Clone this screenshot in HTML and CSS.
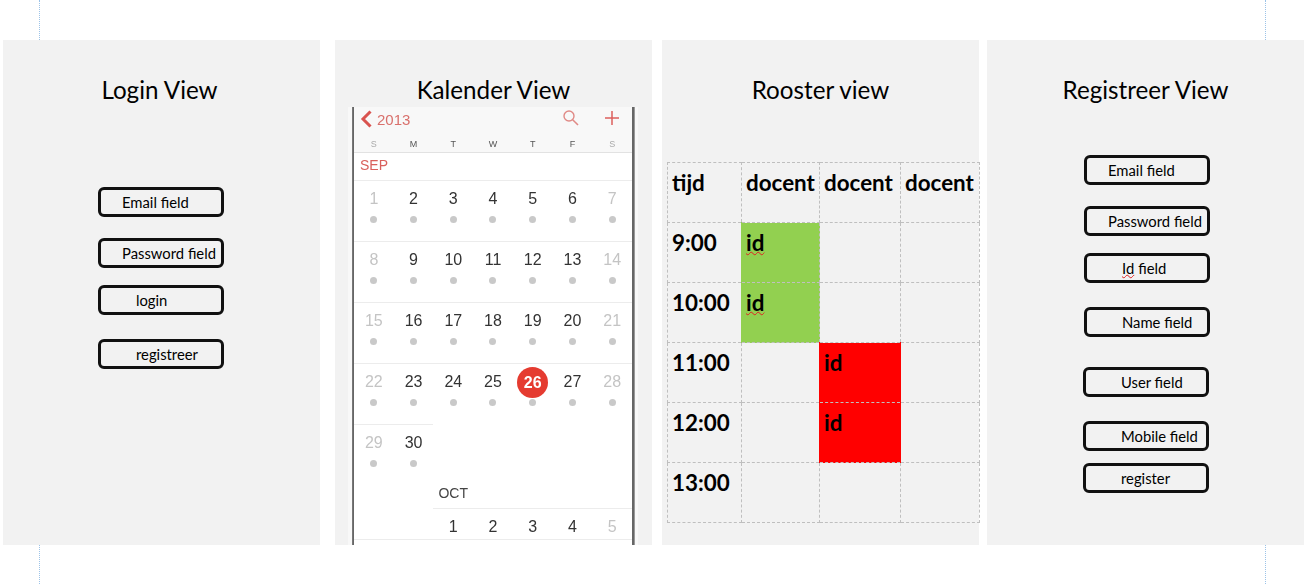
FILE: index.html
```html
<!DOCTYPE html>
<html lang="en">
<head>
    <meta charset="UTF-8">
    <meta name="viewport" content="width=device-width, initial-scale=1.0">
    <title>App Views</title>
    <link rel="stylesheet" href="styles.css">
</head>
<body>
    <div class="guides guides-top"><span></span><span></span></div>

    <div class="board">
        <section class="panel login">
            <h2>Login View</h2>
            <div class="fields">
                <div class="field">Email field</div>
                <div class="field">Password field</div>
                <div class="field wide">login</div>
                <div class="field wide">registreer</div>
            </div>
        </section>

        <section class="panel kalender">
            <h2>Kalender View</h2>
            <div class="phone">
                <div class="cal-head">
                    <div class="cal-bar">
                        <svg class="back" width="12" height="18" viewBox="0 0 12 18"><path d="M10.5 1.5 3 9l7.5 7.5" fill="none" stroke="#d9534f" stroke-width="3"/></svg>
                        <span class="year">2013</span>
                        <svg class="search" width="18" height="18" viewBox="0 0 18 18"><circle cx="7" cy="7" r="5" fill="none" stroke="#e08a86" stroke-width="1.4"/><path d="m10.7 10.7 5.3 5.3" stroke="#e08a86" stroke-width="1.6"/></svg>
                        <svg class="plus" width="16" height="16" viewBox="0 0 16 16"><path d="M8 1v14M1 8h14" stroke="#dc5f5c" stroke-width="1.5"/></svg>
                    </div>
                    <div class="weekdays">
                        <span class="off">S</span><span>M</span><span>T</span><span>W</span><span>T</span><span>F</span><span class="off">S</span>
                    </div>
                </div>
                <div class="month">SEP</div>
                <div class="days">
                    <div class="day off"><b>1</b><i></i></div>
                    <div class="day"><b>2</b><i></i></div>
                    <div class="day"><b>3</b><i></i></div>
                    <div class="day"><b>4</b><i></i></div>
                    <div class="day"><b>5</b><i></i></div>
                    <div class="day"><b>6</b><i></i></div>
                    <div class="day off"><b>7</b><i></i></div>

                    <div class="day off"><b>8</b><i></i></div>
                    <div class="day"><b>9</b><i></i></div>
                    <div class="day"><b>10</b><i></i></div>
                    <div class="day"><b>11</b><i></i></div>
                    <div class="day"><b>12</b><i></i></div>
                    <div class="day"><b>13</b><i></i></div>
                    <div class="day off"><b>14</b><i></i></div>

                    <div class="day off"><b>15</b><i></i></div>
                    <div class="day"><b>16</b><i></i></div>
                    <div class="day"><b>17</b><i></i></div>
                    <div class="day"><b>18</b><i></i></div>
                    <div class="day"><b>19</b><i></i></div>
                    <div class="day"><b>20</b><i></i></div>
                    <div class="day off"><b>21</b><i></i></div>

                    <div class="day off"><b>22</b><i></i></div>
                    <div class="day"><b>23</b><i></i></div>
                    <div class="day"><b>24</b><i></i></div>
                    <div class="day"><b>25</b><i></i></div>
                    <div class="day today"><b>26</b><i></i></div>
                    <div class="day"><b>27</b><i></i></div>
                    <div class="day off"><b>28</b><i></i></div>

                    <div class="day off"><b>29</b><i></i></div>
                    <div class="day"><b>30</b><i></i></div>

                    <div class="oct-label">OCT</div>

                    <div class="oct-days">
                        <div class="day"><b>1</b></div>
                        <div class="day"><b>2</b></div>
                        <div class="day"><b>3</b></div>
                        <div class="day"><b>4</b></div>
                        <div class="day off"><b>5</b></div>
                    </div>
                </div>
            </div>
        </section>

        <section class="panel rooster">
            <h2>Rooster view</h2>
            <table>
                <tr><th>tijd</th><th>docent</th><th>docent</th><th>docent</th></tr>
                <tr><th>9:00</th><td class="green"><u>id</u></td><td></td><td></td></tr>
                <tr><th>10:00</th><td class="green"><u>id</u></td><td></td><td></td></tr>
                <tr><th>11:00</th><td></td><td class="red">id</td><td></td></tr>
                <tr><th>12:00</th><td></td><td class="red">id</td><td></td></tr>
                <tr><th>13:00</th><td></td><td></td><td></td></tr>
            </table>
        </section>

        <section class="panel registreer">
            <h2>Registreer View</h2>
            <div class="fields">
                <div class="field">Email field</div>
                <div class="field">Password field</div>
                <div class="field wide"><u>Id</u> field</div>
                <div class="field wide">Name field</div>
                <div class="field wide">User field</div>
                <div class="field wide">Mobile field</div>
                <div class="field wide">register</div>
            </div>
        </section>
    </div>

    <div class="guides guides-bottom"><span></span><span></span></div>
</body>
</html>
```

FILE: styles.css
```css
html, body {
    margin: 0;
    height: 100%;
    overflow: hidden;
}
body {
    font-family: Lato, "Open Sans", sans-serif;
    background-color: #fff;
    color: #000;
}

/* page margin guides above and below the panels */
.guides {
    display: flex;
    justify-content: space-between;
    padding: 0 44px 0 39px;
}
.guides span {
    border-left: 1px dotted #9cc3e8;
}
.guides-top {
    height: 40px;
}
.guides-bottom {
    height: 39px;
}

.board {
    display: flex;
    height: 505px;
    padding-left: 3px;
}
.panel {
    width: 317px;
    flex: none;
    background-color: #f2f2f2;
    padding-top: 33px;
    box-sizing: border-box;
}
.kalender {
    margin-left: 15px;
}
.rooster {
    margin-left: 10px;
}
.registreer {
    margin-left: 8px;
}
h2 {
    margin: 0;
    padding-bottom: 1px;
    font-size: 24.2px;
    font-weight: normal;
    line-height: 33px;
    text-align: center;
}
.login h2 {
    padding-right: 4px;
}

/* form fields */
.fields {
    display: flex;
    flex-direction: column;
}
.login .fields {
    margin: 80px 0 0 95px;
}
.registreer .fields {
    margin: 48px 0 0 97px;
}
.field {
    display: flex;
    align-items: center;
    gap: 4px;
    width: 126px;
    height: 30px;
    box-sizing: border-box;
    padding-left: 21px;
    border: 3px solid #111;
    border-radius: 6px;
    font-size: 14.8px;
    white-space: nowrap;
}
.field.wide {
    padding-left: 35px;
}
.field:nth-child(2) {
    margin-top: 21px;
}
.field:nth-child(3) {
    margin-top: 17px;
}
.field:nth-child(4) {
    margin-top: 24px;
}
.field:nth-child(5) {
    margin: 30px 0 0 -1px;
}
.field:nth-child(6) {
    margin: 24px 0 0 -1px;
}
.field:nth-child(7) {
    margin: 12px 0 0 -1px;
}
u {
    text-decoration: underline wavy #e02020 1px;
    text-underline-offset: 0;
}

/* calendar screenshot */
.phone {
    width: 290px;
    height: 438px;
    margin-left: 13px;
    box-sizing: border-box;
    overflow: hidden;
    background-color: #fff;
    border-left: 4px solid #f8f8f8;
    border-right: 3px solid #f8f8f8;
    box-shadow: inset 1px 0 0 #777, inset 2px 0 0 #666, inset -1px 0 0 #999, inset -3px 0 0 #666;
    padding: 0 3px 0 2px;
    font-family: "Liberation Sans", Arial, sans-serif;
    filter: blur(0.3px);
}
.cal-head {
    height: 45px;
    background-color: #f8f8f8;
    border-bottom: 1px solid #e2e2e2;
}
.cal-bar {
    display: flex;
    align-items: center;
    height: 22px;
    padding-left: 6px;
}
.back {
    margin-top: 2px;
}
.year {
    margin: 2px 0 0 5px;
    font-size: 15px;
    color: #d9706c;
}
.search {
    margin-left: auto;
}
.plus {
    margin: 0 12px 0 24px;
}
.weekdays {
    display: grid;
    grid-template-columns: repeat(7, 1fr);
    margin-top: 10px;
    font-size: 9px;
    line-height: 10px;
    text-align: center;
    color: #555;
}
.weekdays .off {
    color: #aaa;
}
.month {
    height: 27px;
    padding-left: 6px;
    box-sizing: border-box;
    font-size: 14px;
    line-height: 24px;
    color: #d9605c;
}
.days {
    display: grid;
    grid-template-columns: repeat(7, 1fr);
    grid-template-rows: repeat(5, 61px) 23px 31px;
    border-bottom: 1px solid #ececec;
}
.day {
    display: flex;
    flex-direction: column;
    align-items: center;
    border-top: 1px solid #ececec;
    padding-top: 8px;
    box-sizing: border-box;
}
.day b {
    display: block;
    width: 31px;
    font-size: 16px;
    font-weight: normal;
    line-height: 20px;
    text-align: center;
    color: #333;
}
.day i {
    width: 7px;
    height: 7px;
    margin-top: 7px;
    border-radius: 50%;
    background-color: #c9c9c9;
}
.day.off b {
    color: #c4c4c4;
}
.today b {
    height: 31px;
    margin: -5px 0 1px;
    border-radius: 50%;
    background-color: #e53b30;
    color: #fff;
    font-weight: bold;
    line-height: 31px;
}
.today i {
    margin-top: 0;
}
.oct-label {
    grid-column: 3 / 8;
    grid-row: 6;
    padding-left: 5px;
    font-size: 14px;
    line-height: 16px;
    color: #444;
}
.oct-days {
    grid-column: 3 / 8;
    grid-row: 7;
    display: grid;
    grid-template-columns: repeat(5, 1fr);
}

/* timetable */
table {
    table-layout: fixed;
    width: 313px;
    margin: 55px 0 0 5px;
    border-collapse: collapse;
    font-size: 22.4px;
    font-weight: bold;
}
th, td {
    height: 60px;
    box-sizing: border-box;
    padding: 5px 0 0 4px;
    border: 1px dashed #bfbfbf;
    text-align: left;
    vertical-align: top;
    line-height: 30px;
    white-space: nowrap;
}
th:nth-child(1) {
    width: 74px;
}
th:nth-child(2) {
    width: 78px;
}
th:nth-child(3) {
    width: 81px;
}
.green {
    background-color: #92d050;
    border-left: 1px solid #92d050;
}
.red {
    background-color: #ff0000;
    border-left: 1px solid #ff0000;
    border-right: 1px solid #ff0000;
}
```
